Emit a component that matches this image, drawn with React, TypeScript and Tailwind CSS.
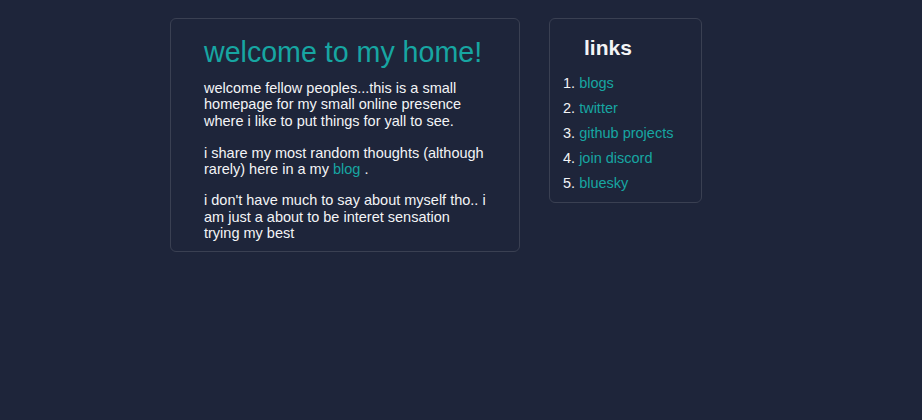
import React from "react";

export default function App() {
  const links = ["blogs", "twitter", "github projects", "join discord", "bluesky"];
  return (
    <div className="min-h-[420px] w-full bg-[#1e253a] text-[#f3f4f6]" style={{ fontFamily: '"Liberation Sans", Arial, sans-serif' }}>
      <div className="flex items-start gap-[29px] pl-[170px] pt-[18px]">
        <div className="w-[350px] rounded-md border border-[#3a4052] pl-[33px] pr-[30px] pt-[16px] pb-[10px]">
          <h1 className="text-[28.6px] leading-[34px] text-[#17a6a2]">welcome to my home!</h1>
          <div className="mt-[11px] text-[14.5px] leading-[16.3px]">
            <p>welcome fellow peoples...this is a small homepage for my small online presence where i like to put things for yall to see.</p>
            <p className="mt-[16px]">i share my most random thoughts (although rarely) here in a my <a className="text-[#17a6a2]">blog</a> .</p>
            <p className="mt-[15px]">i don't have much to say about myself tho.. i am just a about to be interet sensation trying my best</p>
          </div>
        </div>
        <div className="w-[153px] rounded-md border border-[#3a4052] pt-[17px] pb-[11px]">
          <h2 className="pl-[34px] text-[21px] font-bold leading-[24px]">links</h2>
          <ol className="mt-[15px] list-inside list-decimal pl-[13px] text-[14.5px] leading-[16px]">
            {links.map((l, i) => (
              <li key={l} className={i === 0 ? "" : "mt-[9px]"}>
                <a className="text-[#17a6a2]">{l}</a>
              </li>
            ))}
          </ol>
        </div>
      </div>
    </div>
  );
}
